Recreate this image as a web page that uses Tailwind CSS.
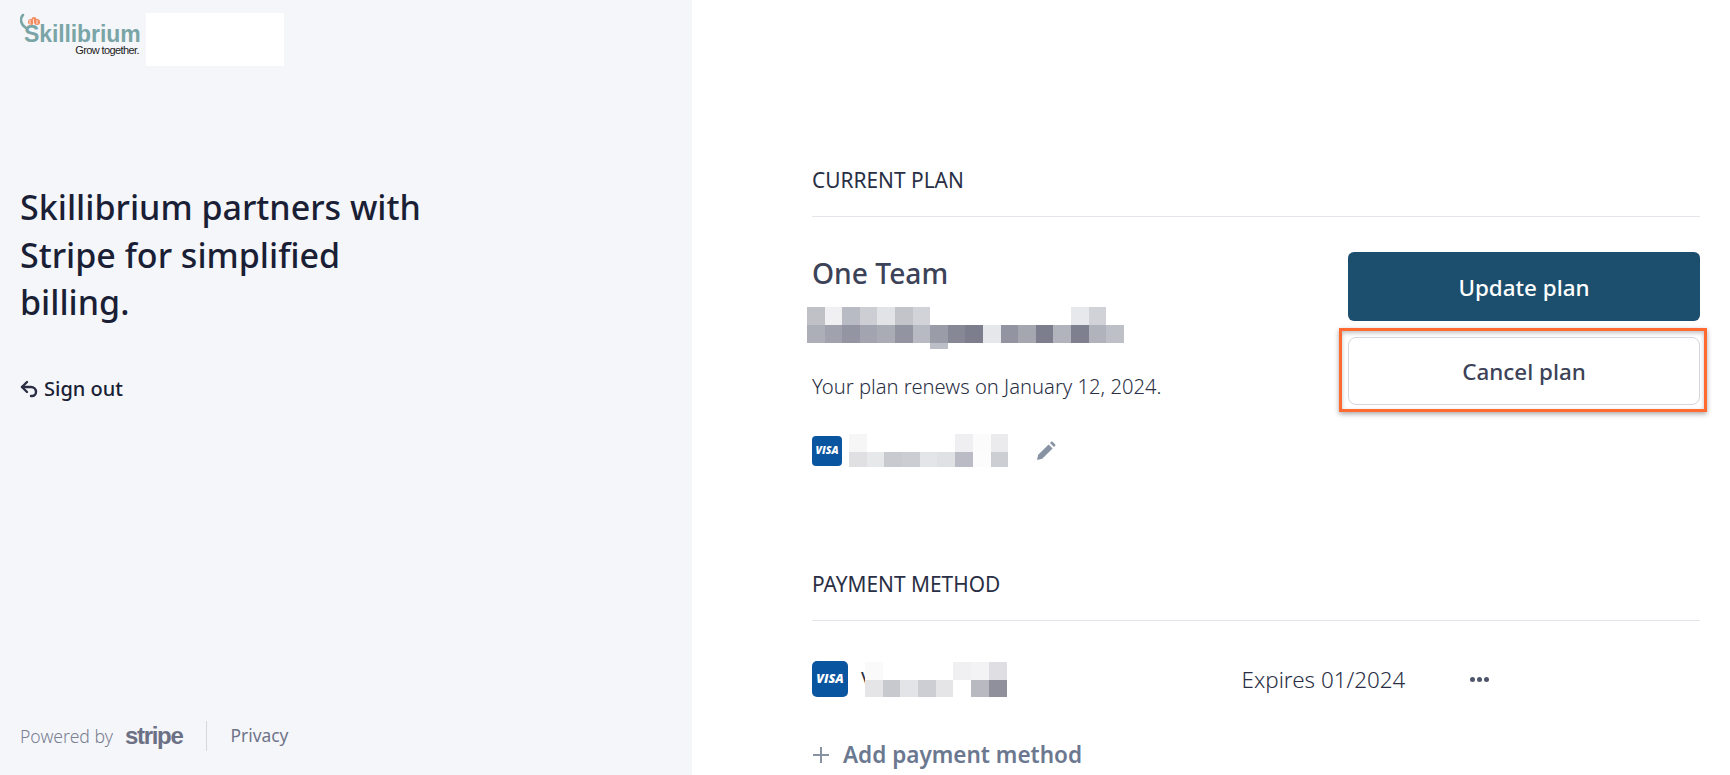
<!DOCTYPE html>
<html lang="en">
<head>
    <meta charset="UTF-8">
    <title>Billing</title>
    <script src="https://cdn.jsdelivr.net/npm/@tailwindcss/browser@4"></script>
</head>
<body class="bg-white font-['Noto_Sans',sans-serif] text-[#1a1f36]">
<div class="flex h-[775px] w-[1730px] overflow-hidden">

    <!-- Left panel -->
    <aside class="flex w-[692px] shrink-0 flex-col bg-[#f5f6fa] pl-5">
        <div class="flex items-start pt-[13px]">
            <div class="relative h-[53px] w-[126px]">
                <svg class="absolute left-0 top-0" width="40" height="30" viewBox="0 0 40 30" fill="none">
                    <path d="M3 2C0 5 0 11 6 15" stroke="#7aa5a6" stroke-width="2.5" stroke-linecap="round"/>
                    <circle cx="11" cy="9" r="3" fill="#f58a5e"/>
                    <circle cx="14" cy="6.5" r="2.5" fill="#f58a5e"/>
                    <circle cx="17" cy="9" r="3" fill="#f58a5e"/>
                    <path d="M10 7v5M13.500 6v6M17 7v4" stroke="#fff" stroke-width="0.8"/>
                </svg>
                <span class="absolute left-[4px] top-[7px] font-['Liberation_Sans',sans-serif] text-[23px] font-bold leading-[28px] tracking-[-0.1px] text-[#7aa5a6]">Skillibrium</span>
                <span class="absolute right-[7px] top-[30px] font-['Liberation_Sans',sans-serif] text-[11px] leading-[14px] tracking-[-0.6px] text-[#222]">Grow together.</span>
            </div>
            <div class="h-[53px] w-[138px] bg-white"></div>
        </div>
        <h1 class="mt-[118px] w-[420px] text-[34px] font-medium leading-[47.5px] text-[#1a1f36]">Skillibrium partners with Stripe for simplified billing.</h1>
        <a class="mt-[49px] flex items-center gap-[5px] text-[20px] font-medium leading-[26px] text-[#1a1f36]">
            <svg width="19" height="19" viewBox="0 0 19 19" fill="none" stroke="#2a2f45" stroke-width="2.400" stroke-linecap="round" stroke-linejoin="round">
                <path d="M7 3 2 8l5 5"/><path d="M2 8h9a5 5 0 0 1 5 5 4 4 0 0 1-4 4h-1"/>
            </svg>
            Sign out
        </a>
        <div class="mt-auto mb-[24px] flex items-center">
            <span class="text-[17.6px] font-light text-[#7a7f92]">Powered by</span>
            <span class="ml-[12px] font-['Liberation_Sans',sans-serif] text-[24px] font-bold leading-[30px] tracking-[-1.3px] text-[#6b7085]">stripe</span>
            <span class="ml-[24px] h-[30px] w-px bg-[#d5d7de]"></span>
            <span class="mb-[2px] ml-[23px] text-[17.4px] text-[#6f7489]">Privacy</span>
        </div>
    </aside>

    <!-- Right panel -->
    <main class="flex-1 pl-[120px] pr-[30px] pt-[166px]">
        <h2 class="text-[20.9px] leading-[28px] text-[#2a2f45]">CURRENT PLAN</h2>
        <hr class="mt-[22px] border-[#e3e5ea]">

        <div class="flex justify-between">
            <div>
                <h3 class="mt-[36px] text-[28.2px] font-[550] leading-[40px] text-[#3c4257]">One Team</h3>

                <!-- blurred details -->
                <div class="-ml-[5px] mt-[14px] flex">
                    <i class="h-[18px] w-[17.6px] bg-[#c0c1c7]"></i><i class="h-[18px] w-[17.6px] bg-[#f0f0f2]"></i><i class="h-[18px] w-[17.6px] bg-[#b8bbc4]"></i><i class="h-[18px] w-[17.6px] bg-[#cdced4]"></i><i class="h-[18px] w-[17.6px] bg-[#e2e3e7]"></i><i class="h-[18px] w-[17.6px] bg-[#c3c4ca]"></i><i class="h-[18px] w-[17.6px] bg-[#d2d3d8]"></i>
                    <i class="ml-[140.8px] h-[18px] w-[17.6px] bg-[#e7e8eb]"></i><i class="h-[18px] w-[17.6px] bg-[#d1d2d7]"></i>
                </div>
                <div class="-ml-[5px] flex">
                    <i class="h-[18px] w-[17.6px] bg-[#acaeb8]"></i><i class="h-[18px] w-[17.6px] bg-[#a0a2ad]"></i><i class="h-[18px] w-[17.6px] bg-[#9395a2]"></i><i class="h-[18px] w-[17.6px] bg-[#a2a5af]"></i><i class="h-[18px] w-[17.6px] bg-[#a9abb5]"></i><i class="h-[18px] w-[17.6px] bg-[#9294a1]"></i><i class="h-[18px] w-[17.6px] bg-[#b8bac3]"></i><i class="h-[18px] w-[17.6px] bg-[#9a9ca8]"></i><i class="h-[18px] w-[17.6px] bg-[#868895]"></i><i class="h-[18px] w-[17.6px] bg-[#7c7e8d]"></i><i class="h-[18px] w-[17.6px] bg-[#e6e7ea]"></i><i class="h-[18px] w-[17.6px] bg-[#9294a1]"></i><i class="h-[18px] w-[17.6px] bg-[#a4a6b0]"></i><i class="h-[18px] w-[17.6px] bg-[#7c7e8e]"></i><i class="h-[18px] w-[17.6px] bg-[#b2b4bd]"></i><i class="h-[18px] w-[17.6px] bg-[#7e808f]"></i><i class="h-[18px] w-[17.6px] bg-[#b0b2bc]"></i><i class="h-[18px] w-[17.6px] bg-[#bec0c8]"></i>
                </div>
                <div class="ml-[118px] h-[6px] w-[18px] bg-[#bcbec8]"></div>

                <p class="mt-[23px] text-[20.2px] font-light leading-[28px] text-[#2a2f45]">Your plan renews on January 12, 2024.</p>

                <div class="mt-[34px] flex items-center">
                    <div class="flex h-[30px] w-[30px] items-center justify-center rounded-[4px] bg-[#0a559f] font-['Open_Sans',sans-serif] text-[10.5px] font-extrabold italic text-white">VISA</div>
                    <div class="ml-[7px]">
                        <div class="flex">
                            <i class="h-[18px] w-[17.7px] bg-[#f6f6f7]"></i><i class="ml-[88.5px] h-[18px] w-[17.7px] bg-[#efeff1]"></i><i class="h-[18px] w-[17.7px] bg-[#fbfbfb]"></i><i class="h-[18px] w-[17.7px] bg-[#ebebee]"></i>
                        </div>
                        <div class="flex">
                            <i class="h-[15px] w-[17.7px] bg-[#e0e0e3]"></i><i class="h-[15px] w-[17.7px] bg-[#e7e8ea]"></i><i class="h-[15px] w-[17.7px] bg-[#c9cad0]"></i><i class="h-[15px] w-[17.7px] bg-[#cccdd3]"></i><i class="h-[15px] w-[17.7px] bg-[#e4e5e8]"></i><i class="h-[15px] w-[17.7px] bg-[#e0e1e5]"></i><i class="h-[15px] w-[17.7px] bg-[#babbc4]"></i><i class="h-[15px] w-[17.7px] bg-[#fbfcfb]"></i><i class="h-[15px] w-[17.7px] bg-[#cdced4]"></i>
                        </div>
                    </div>
                    <svg class="ml-[28px]" width="20" height="20" viewBox="0 0 20 20" fill="#8792a2">
                        <path d="M1 19l1.200-5.200L12.600 3.400l4 4L6.200 17.800z"/><path d="M14 2l1.200-1.200a1 1 0 0 1 1.400 0l2.600 2.600a1 1 0 0 1 0 1.400L18 6z"/>
                    </svg>
                </div>
            </div>

            <div class="relative mt-[35px] flex h-fit w-[352px] flex-col gap-4">
                <button class="h-[69px] rounded-[6px] bg-[#1c4f6e] pt-[2px] text-[22.4px] font-[550] text-white">Update plan</button>
                <button class="h-[68px] rounded-[8px] border border-[#d5d7dd] bg-white pt-[2px] text-[22.4px] font-[550] text-[#3c4257]">Cancel plan</button>
                <!-- annotation box -->
                <div class="absolute left-[-9px] top-[76px] h-[84px] w-[368px] border-[3px] border-[#ff6a33] shadow-[0_2px_5px_rgba(0,0,0,0.35),inset_0_2px_4px_rgba(0,0,0,0.25)]"></div>
            </div>
        </div>

        <h2 class="mt-[103px] text-[20.9px] leading-[28px] text-[#2a2f45]">PAYMENT METHOD</h2>
        <hr class="mt-[22px] border-[#e3e5ea]">

        <div class="mt-[40px] flex items-center">
            <div class="flex h-[36px] w-[36px] items-center justify-center rounded-[5px] bg-[#0a559f] font-['Open_Sans',sans-serif] text-[12.5px] font-extrabold italic text-white">VISA</div>
            <!-- the masked card text sits under the pixel block -->
            <span class="ml-[13px] mr-[-8px] text-[20px] leading-[28px] text-[#2a2f45]">V</span>
            <div class="relative">
                <div class="flex">
                    <i class="h-[18px] w-[17.7px] bg-[#fafafa]"></i><i class="ml-[70.8px] h-[18px] w-[17.7px] bg-[#f0f0f2]"></i><i class="h-[18px] w-[17.7px] bg-[#f3f3f5]"></i><i class="h-[18px] w-[17.7px] bg-[#dfdfe3]"></i>
                </div>
                <div class="flex">
                    <i class="h-[17px] w-[17.7px] bg-[#e5e5e8]"></i><i class="h-[17px] w-[17.7px] bg-[#c8c9cf]"></i><i class="h-[17px] w-[17.7px] bg-[#e3e4e7]"></i><i class="h-[17px] w-[17.7px] bg-[#cdced4]"></i><i class="h-[17px] w-[17.7px] bg-[#e5e5e8]"></i><i class="h-[17px] w-[17.7px] bg-white"></i><i class="h-[17px] w-[17.7px] bg-[#b9bac1]"></i><i class="h-[17px] w-[17.7px] bg-[#8f909c]"></i>
                </div>
            </div>
            <span class="ml-[235px] mt-[1px] text-[22.4px] font-light leading-[30px] text-[#2a2f45]">Expires 01/2024</span>
            <div class="ml-[65px] flex gap-[2px]">
                <i class="h-[5px] w-[5px] rounded-full bg-[#4f566b]"></i><i class="h-[5px] w-[5px] rounded-full bg-[#4f566b]"></i><i class="h-[5px] w-[5px] rounded-full bg-[#4f566b]"></i>
            </div>
        </div>

        <div class="mt-[43px] flex items-center gap-[13px] text-[#6b7890]">
            <svg width="18" height="18" viewBox="0 0 18 18" fill="none" stroke="#8792a2" stroke-width="2"><path d="M9 1v16M1 9h16"/></svg>
            <span class="text-[22.5px] font-semibold leading-[30px]">Add payment method</span>
        </div>
    </main>
</div>
</body>
</html>
